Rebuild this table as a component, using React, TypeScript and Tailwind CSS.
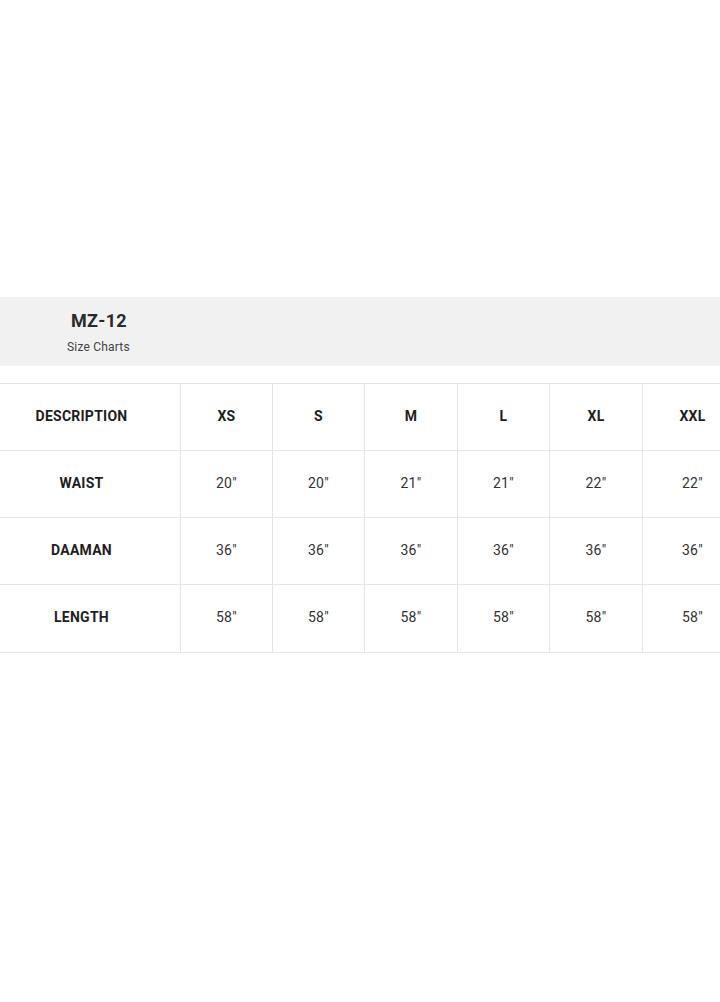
import React from "react";

const sizes = ["XS", "S", "M", "L", "XL", "XXL"];
const rows: { label: string; values: string[] }[] = [
  { label: "WAIST", values: ['20"', '20"', '21"', '21"', '22"', '22"'] },
  { label: "DAAMAN", values: ['36"', '36"', '36"', '36"', '36"', '36"'] },
  { label: "LENGTH", values: ['58"', '58"', '58"', '58"', '58"', '58"'] },
];

const colW = ["w-[198px]", "w-[92px]", "w-[92px]", "w-[93px]", "w-[92px]", "w-[93px]", "w-[100px]"];

export default function App() {
  return (
    <div className="w-[720px] h-[1002px] bg-white overflow-hidden font-['Roboto',sans-serif]">
      <div className="pt-[297px]">
        <div className="h-[69px] bg-[#f1f1f1] flex flex-col pl-[67px] pt-[12px]">
          <div className="w-[64px] text-center text-[18px] leading-[24px] font-bold text-[#2a2a2a] tracking-[0.3px]">MZ-12</div>
          <div className="text-[12px] leading-[16px] text-[#444] mt-[6px] tracking-[0.2px]">Size Charts</div>
        </div>
        <div className="mt-[17px] ml-[-18px] w-[760px]">
          <table className="border-collapse table-fixed w-[760px] tracking-[0.25px]">
            <thead>
              <tr className="h-[67px]">
                <th className={`${colW[0]} border border-[#e6e6e6] pb-[2px] text-[14px] font-bold text-[#1e1e1e]`}>DESCRIPTION</th>
                {sizes.map((s, i) => (
                  <th key={s} className={`${colW[i + 1]} border border-[#e6e6e6] pb-[2px] text-[14px] font-bold text-[#1e1e1e]`}>
                    {s}
                  </th>
                ))}
              </tr>
            </thead>
            <tbody>
              {rows.map((r, ri) => (
                <tr key={r.label} className={ri === 2 ? "h-[68px]" : "h-[67px]"}>
                  <td className="border border-[#e6e6e6] pb-[2px] text-center text-[14px] font-bold text-[#1e1e1e]">{r.label}</td>
                  {r.values.map((v, i) => (
                    <td key={i} className="border border-[#e6e6e6] pb-[2px] text-center text-[14px] text-[#333]">
                      {v}
                    </td>
                  ))}
                </tr>
              ))}
            </tbody>
          </table>
        </div>
      </div>
    </div>
  );
}
